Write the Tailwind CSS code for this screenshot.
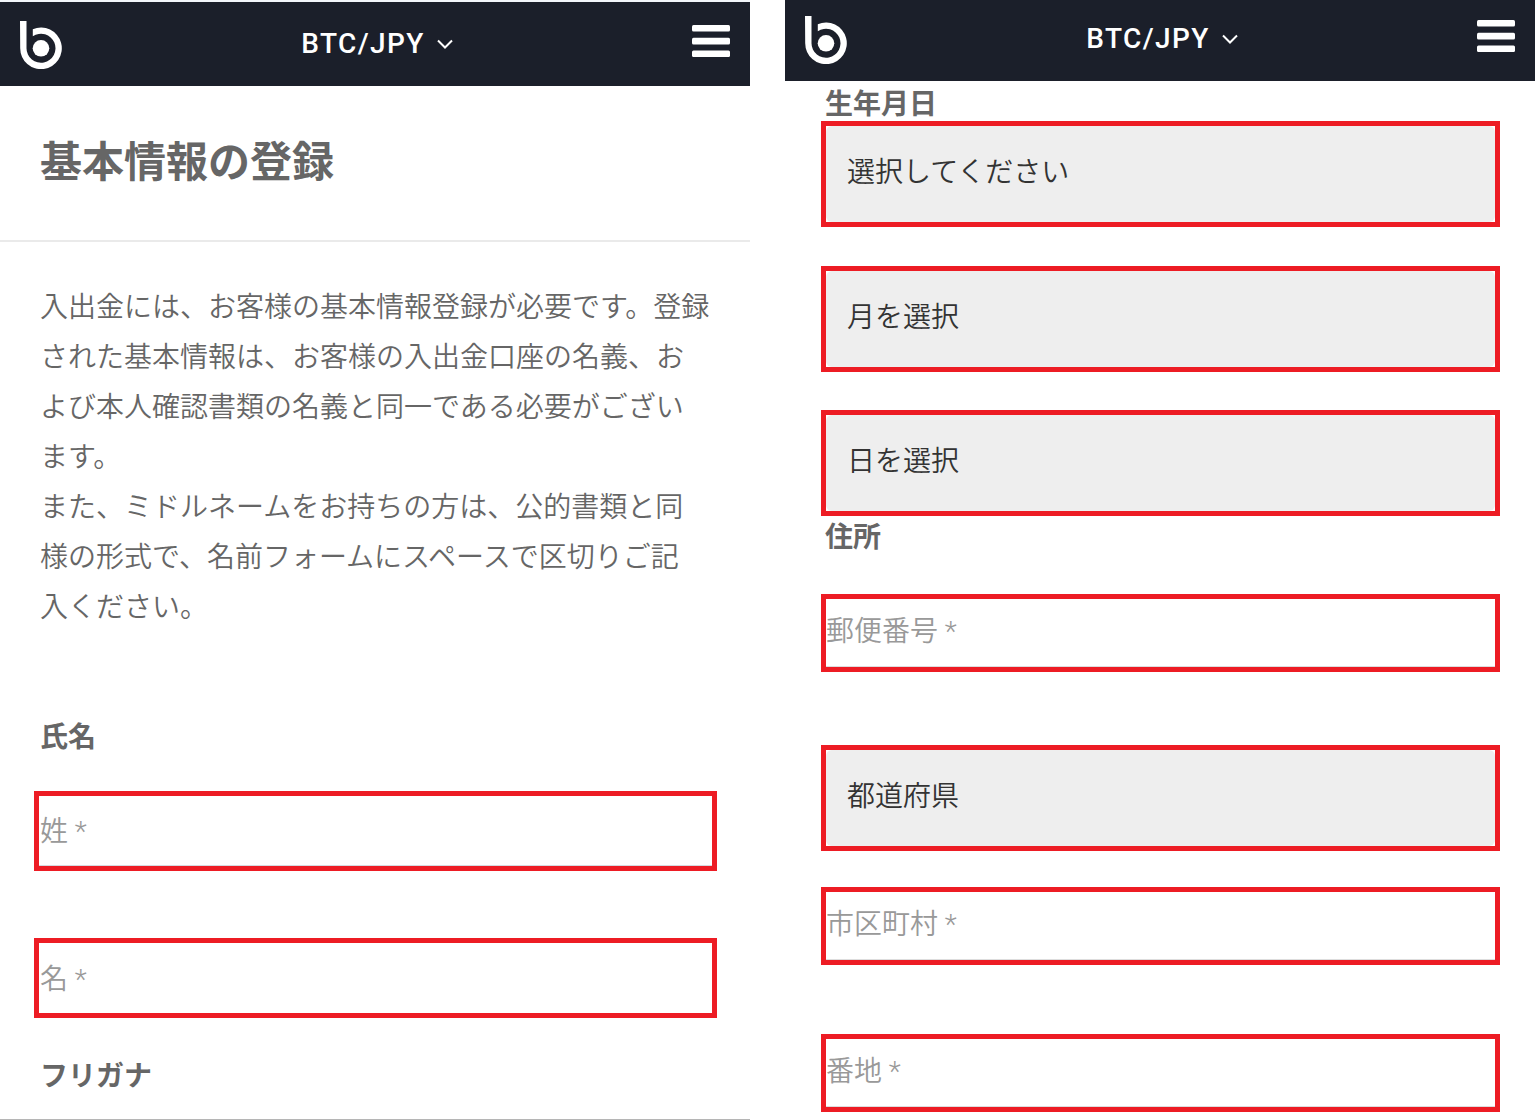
<!DOCTYPE html>
<html lang="ja">

<head>
    <meta charset="UTF-8">
    <meta name="viewport" content="width=device-width, initial-scale=1.0">
    <title>基本情報の登録</title>
    <script src="https://cdn.jsdelivr.net/npm/@tailwindcss/browser@4"></script>
</head>

<body class="bg-white text-[28px] text-[#666] font-['Roboto','Noto_Sans_CJK_JP',sans-serif]">
    <div class="grid grid-cols-2 gap-[35px] pr-[5px]">

        <!-- 氏名 -->
        <section>
            <header class="flex h-[86px] items-start justify-between border-t-2 border-[#f3f6fa] bg-[#1b1f2a] px-5 pt-[19px] text-white">
                <a href="#" aria-label="ホーム">
                    <svg class="h-12 w-[42px]" viewBox="0 0 42 48" fill="currentColor">
                        <path d="M0 0H6.5V27.3A14.5 14.5 0 1 0 12.8 15.3V8.2A20.8 20.8 0 1 1 0.2 27.3Z" />
                        <circle cx="21" cy="27.3" r="8.3" />
                    </svg>
                </a>
                <button type="button" class="flex items-center gap-3 leading-[46px] font-medium tracking-wider">BTC/JPY
                    <svg class="h-4 w-4" viewBox="0 0 16 16" fill="none" stroke="currentColor" stroke-width="2">
                        <path d="M1 4.5L8 11.5L15 4.5" />
                    </svg>
                </button>
                <button type="button" aria-label="メニュー" class="flex h-10 items-center">
                    <svg class="h-8 w-[38px]" viewBox="0 0 38 32" fill="currentColor">
                        <rect y="0" width="38" height="6.6" rx="1.5" />
                        <rect y="12.8" width="38" height="6.6" rx="1.5" />
                        <rect y="25.4" width="38" height="6.6" rx="1.5" />
                    </svg>
                </button>
            </header>

            <h1 class="border-b-2 border-[#eaeaea] px-10 py-[52px] text-[42px] leading-[50px] font-bold">基本情報の登録</h1>

            <p class="pt-[41px] pl-10 leading-[50px] font-[350] whitespace-nowrap">
                入出金には、お客様の基本情報登録が必要です。登録<br>
                された基本情報は、お客様の入出金口座の名義、お<br>
                よび本人確認書類の名義と同一である必要がござい<br>
                ます。<br>
                また、ミドルネームをお持ちの方は、公的書類と同<br>
                様の形式で、名前フォームにスペースで区切りご記<br>
                入ください。
            </p>

            <form>
                <label for="sei" class="mt-[85px] block px-10 leading-10 font-bold">氏名</label>
                <div class="mt-[33px] mr-[33px] ml-[34px] border-5 border-[#ed1c24]">
                    <input type="text" id="sei" name="sei" placeholder="姓 *"
                        class="block h-[70px] w-full border-b border-[#d5dae0] px-px pt-0.5 font-[350] placeholder:text-[#999] focus:outline-none">
                </div>
                <div class="mt-[67px] mr-[33px] ml-[34px] border-5 border-[#ed1c24]">
                    <input type="text" id="mei" name="mei" placeholder="名 *" aria-label="名"
                        class="block h-[70px] w-full px-px pt-0.5 font-[350] placeholder:text-[#999] focus:outline-none">
                </div>
                <h2 class="mt-[39px] border-b-2 border-[#b5b5b5] px-10 pb-[22px] leading-10 font-bold">フリガナ</h2>
            </form>
        </section>

        <!-- 生年月日・住所 -->
        <section>
            <header class="flex h-[81px] items-start justify-between bg-[#1b1f2a] px-5 pt-4 text-white">
                <a href="#" aria-label="ホーム">
                    <svg class="h-12 w-[42px]" viewBox="0 0 42 48" fill="currentColor">
                        <path d="M0 0H6.5V27.3A14.5 14.5 0 1 0 12.8 15.3V8.2A20.8 20.8 0 1 1 0.2 27.3Z" />
                        <circle cx="21" cy="27.3" r="8.3" />
                    </svg>
                </a>
                <button type="button" class="flex items-center gap-3 leading-[46px] font-medium tracking-wider">BTC/JPY
                    <svg class="h-4 w-4" viewBox="0 0 16 16" fill="none" stroke="currentColor" stroke-width="2">
                        <path d="M1 4.5L8 11.5L15 4.5" />
                    </svg>
                </button>
                <button type="button" aria-label="メニュー" class="flex h-10 items-center">
                    <svg class="h-8 w-[38px]" viewBox="0 0 38 32" fill="currentColor">
                        <rect y="0" width="38" height="6.6" rx="1.5" />
                        <rect y="12.8" width="38" height="6.6" rx="1.5" />
                        <rect y="25.4" width="38" height="6.6" rx="1.5" />
                    </svg>
                </button>
            </header>

            <form class="pt-2 pr-[35px] pl-9">
                <label for="year" class="block px-1 leading-8 font-bold">生年月日</label>
                <div class="border-5 border-[#ed1c24]">
                    <select id="year" name="year"
                        class="block h-24 w-full appearance-none rounded-md bg-[#eee] px-[21px] pb-0.5 font-[350] text-[#333]">
                        <option>選択してください</option>
                    </select>
                </div>
                <div class="mt-[39px] border-5 border-[#ed1c24]">
                    <select name="month" aria-label="月"
                        class="block h-24 w-full appearance-none rounded-md bg-[#eee] px-[21px] pb-0.5 font-[350] text-[#333]">
                        <option>月を選択</option>
                    </select>
                </div>
                <div class="mt-[38px] border-5 border-[#ed1c24]">
                    <select name="day" aria-label="日"
                        class="block h-24 w-full appearance-none rounded-md bg-[#eee] px-[21px] pb-0.5 font-[350] text-[#333]">
                        <option>日を選択</option>
                    </select>
                </div>

                <label for="zip" class="mt-1.5 block px-1 leading-8 font-bold">住所</label>
                <div class="mt-10 border-5 border-[#ed1c24]">
                    <input type="text" id="zip" name="zip" placeholder="郵便番号 *"
                        class="block h-[68px] w-full border-b border-[#ddd] pb-0.5 font-[350] placeholder:text-[#999] focus:outline-none">
                </div>
                <div class="mt-[73px] border-5 border-[#ed1c24]">
                    <select name="pref" aria-label="都道府県"
                        class="block h-24 w-full appearance-none rounded-md bg-[#eee] px-[21px] pb-0.5 font-[350] text-[#333]">
                        <option>都道府県</option>
                    </select>
                </div>
                <div class="mt-9 border-5 border-[#ed1c24]">
                    <input type="text" name="city" placeholder="市区町村 *" aria-label="市区町村"
                        class="block h-[68px] w-full border-b border-[#ddd] pb-0.5 font-[350] placeholder:text-[#999] focus:outline-none">
                </div>
                <div class="mt-[69px] border-5 border-[#ed1c24]">
                    <input type="text" name="street" placeholder="番地 *" aria-label="番地"
                        class="block h-[68px] w-full border-b border-[#ddd] pb-0.5 font-[350] placeholder:text-[#999] focus:outline-none">
                </div>
            </form>
        </section>

    </div>
</body>

</html>
